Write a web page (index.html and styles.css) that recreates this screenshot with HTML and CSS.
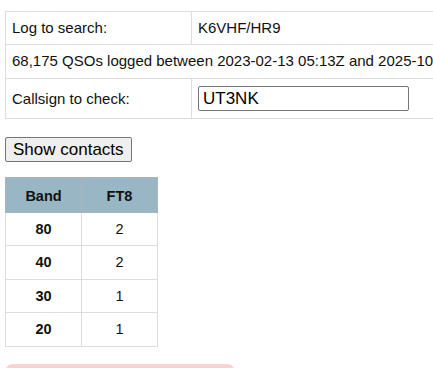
FILE: index.html
```html
<!DOCTYPE html>
<html lang="en">
<head>
  <meta charset="UTF-8">
  <meta name="viewport" content="width=device-width, initial-scale=1.0">
  <title>Log Search</title>
  <link rel="stylesheet" href="styles.css">
</head>
<body>

  <!-- Search form -->
  <table class="search-table">
    <tr>
      <td class="label-cell">Log to search:</td>
      <td>K6VHF/HR9</td>
    </tr>
    <tr>
      <td colspan="2" class="log-info">68,175 QSOs logged between 2023-02-13 05:13Z and 2025-10-04 18:42Z</td>
    </tr>
    <tr>
      <td class="label-cell">Callsign to check:</td>
      <td><input type="text" id="callsign" class="call-input" value="UT3NK"></td>
    </tr>
  </table>

  <button class="show-btn">Show contacts</button>

  <!-- Results -->
  <table class="band-table">
    <tr>
      <th>Band</th>
      <th>FT8</th>
    </tr>
    <tr><td class="band">80</td><td>2</td></tr>
    <tr><td class="band">40</td><td>2</td></tr>
    <tr><td class="band">30</td><td>1</td></tr>
    <tr><td class="band">20</td><td>1</td></tr>
  </table>

  <div class="notice">No QSL confirmation on record yet.</div>

</body>
</html>
```
FILE: styles.css
```css
html {
  overflow: hidden;
}
body {
  font-family: "Liberation Sans", Arial, sans-serif;
  margin: 0;
  padding: 11px 5px;
  color: #111;
  background-color: #fff;
}
.search-table {
  border-collapse: collapse;
  font-size: 15px;
  white-space: nowrap;
}
.search-table td {
  border: 1px solid #ddd;
  padding: 7px 6px;
  line-height: 18px;
}
.search-table .label-cell {
  width: 173px;
}
.search-table .log-info {
  padding-bottom: 8px;
}
.call-input {
  font-family: "Liberation Sans", Arial, sans-serif;
  font-size: 17px;
  width: 211px;
  height: 25px;
  box-sizing: border-box;
  padding: 1px 4px;
  border: 1px solid #767676;
  border-radius: 2px;
  display: block;
  margin: 0;
}
.show-btn {
  display: block;
  font-family: "Liberation Sans", Arial, sans-serif;
  font-size: 17px;
  margin: 18px 0 15px;
  padding: 1px 7px;
  height: 25px;
  background-color: #efefef;
  border: 1px solid #767676;
  border-radius: 2px;
  color: #000;
}
.band-table {
  border-collapse: collapse;
  font-size: 14.5px;
  text-align: center;
}
.band-table th,
.band-table td {
  width: 75px;
  padding: 8px 0;
  line-height: 16.5px;
  border: 1px solid #ddd;
}
.band-table th {
  background-color: #98b6c4;
  border-color: #aab4ba;
  padding: 10px 0 7px;
}
.band-table .band {
  font-weight: bold;
}
.notice {
  margin-top: 17px;
  width: 206px;
  padding: 12px;
  background-color: #f8d2d2;
  border-radius: 8px;
  color: #721c24;
}
```
